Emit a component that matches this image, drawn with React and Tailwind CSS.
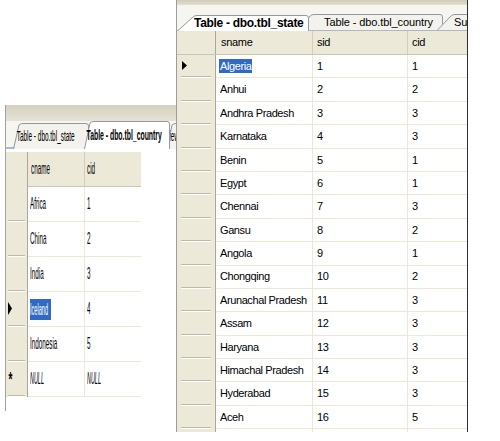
import React from 'react';

const stateRows = [
  ['Algeria', 1, 1],
  ['Anhui', 2, 2],
  ['Andhra Pradesh', 3, 3],
  ['Karnataka', 4, 3],
  ['Benin', 5, 1],
  ['Egypt', 6, 1],
  ['Chennai', 7, 3],
  ['Gansu', 8, 2],
  ['Angola', 9, 1],
  ['Chongqing', 10, 2],
  ['Arunachal Pradesh', 11, 3],
  ['Assam', 12, 3],
  ['Haryana', 13, 3],
  ['Himachal Pradesh', 14, 3],
  ['Hyderabad', 15, 3],
  ['Aceh', 16, 5],
  ['', '', ''],
];

const countryRows = [
  ['Africa', '1'],
  ['China', '2'],
  ['India', '3'],
  ['Iceland', '4'],
  ['Indonesia', '5'],
];

// XP style document tab, left edge slanted
const Tab = ({ width, height, slant, active, drop = 0, className, children }) => {
  const h = height;
  const bottom = active ? h : h - drop;
  const d = `M0.5 ${bottom} L${slant} 2 Q${slant + 1.5} 0.5 ${slant + 4} 0.5 L${width - 3} 0.5 Q${width - 0.5} 0.5 ${width - 0.5} 3 L${width - 0.5} ${bottom}`;
  return (
    <div className={`relative shrink-0 ${active ? 'z-10' : ''} ${className}`} style={{ width, height }}>
      <svg className="absolute inset-0" width={width} height={h}>
        <path d={d + ' Z'} fill={active ? '#ffffff' : '#f3f2ec'} stroke="none" />
        <path d={d} fill="none" stroke="#8f9aa3" strokeWidth="1" />
      </svg>
      <div className="relative h-full flex items-center whitespace-nowrap">{children}</div>
    </div>
  );
};

const Arrow = ({ w, h }) => (
  <svg width={w} height={h} viewBox={`0 0 ${w} ${h}`}>
    <path d={`M0 0 L${w} ${h / 2} L0 ${h} Z`} fill="#000" />
  </svg>
);

const Squeezed = ({ className = '', children }) => (
  <span className={`inline-block origin-left whitespace-nowrap ${className}`}>{children}</span>
);

const StatePanel = () => (
  <div className="absolute left-[176px] top-0 w-[292px] h-[432px] overflow-hidden bg-white border-l border-[#9d9d9d] border-r border-r-[#2f2f2f] font-['Liberation_Sans',Arial,sans-serif] text-black">
    <div className="h-[5px] bg-gradient-to-b from-[#cfccbb] to-[#e2dfd0]" />
    <div className="h-[26px] bg-[#f6f5ef] flex items-end border-b border-[#aeb7c2]">
      <Tab width={132} height={16} slant={16} active className="-mb-px">
        <span className="pl-[17px] text-[12px] font-bold tracking-[-0.3px]">Table - dbo.tbl_state</span>
      </Tab>
      <Tab width={143} height={16} slant={10} className="-ml-[9px]">
        <span className="pl-[24px] text-[11px] tracking-[-0.1px]">Table - dbo.tbl_country</span>
      </Tab>
      <Tab width={60} height={16} slant={14} className="-ml-[6px]">
        <span className="pl-[17px] text-[11px]">Summary</span>
      </Tab>
    </div>
    <div className="flex h-[24px] bg-[#ece9d8] border-b border-[#c8c5b4] text-[11px] tracking-[-0.3px]">
      <div className="w-[39px] shrink-0 border-r border-[#aca899]" />
      <div className="w-[97px] shrink-0 pl-[5px] flex items-center border-r border-[#d2cebd]">sname</div>
      <div className="w-[95px] shrink-0 pl-[4px] flex items-center border-r border-[#d2cebd]">sid</div>
      <div className="flex-1 pl-[4px] flex items-center">cid</div>
    </div>
    {stateRows.map((r, i) => (
      <div key={i} className="flex h-[23.4px] text-[11px] tracking-[-0.4px]">
        <div className="w-[39px] shrink-0 bg-[#ece9d8] border-r border-[#aca899] flex flex-col">
          <div className="flex-1 flex items-center pl-[5px]">{i === 0 && <Arrow w={5} h={9} />}</div>
          <div className="mx-[4px] h-[2px] border-t border-[#bdbaa9] border-b border-b-white" />
        </div>
        <div className="w-[97px] shrink-0 pl-[3px] flex items-center border-r border-b border-[#ebe8d6]">
          {i === 0 ? (
            <span className="bg-[#316ac5] text-white px-px leading-[14px]">{r[0]}</span>
          ) : (
            <span className="px-px">{r[0]}</span>
          )}
        </div>
        <div className="w-[95px] shrink-0 pl-[4px] flex items-center border-r border-b border-[#ebe8d6]">{r[1]}</div>
        <div className="flex-1 pl-[4px] flex items-center border-b border-[#ebe8d6]">{r[2]}</div>
      </div>
    ))}
  </div>
);

const CountryPanel = () => (
  <div className="absolute left-[5px] top-[105px] w-[172px] h-[306px] overflow-hidden bg-white border-l border-[#a3a3a3] font-['Liberation_Sans',Arial,sans-serif] text-black">
    <div className="h-[16px] bg-gradient-to-b from-[#d3d0bf] to-[#e6e3d5]" />
    <div className="h-[28px] bg-[#f6f5ef] flex items-end border-b-2 border-[#a8bcd6] pl-[7px]">
      <Tab width={76} height={26} slant={6} drop={0} className="-mb-[2px]">
        <Squeezed className="pl-[8px] text-[14px] scale-x-[0.46]">Table - dbo.tbl_state</Squeezed>
      </Tab>
      <Tab width={86} height={28} slant={6} active className="-ml-[5px] -mb-[2px]">
        <Squeezed className="pl-[5px] text-[14px] font-bold scale-x-[0.49]">Table - dbo.tbl_country</Squeezed>
      </Tab>
      <Tab width={40} height={26} slant={5} className="-ml-[3px] -mb-[2px]">
        <Squeezed className="pl-[5px] text-[14px] scale-x-[0.45]">iew - dbo</Squeezed>
      </Tab>
    </div>
    <div className="h-[3px]" />
    <div className="flex h-[35px] text-[17px]">
      <div className="w-[22px] shrink-0 bg-[#ece9d8] border-r border-[#aca899]" />
      <div className="w-[57px] shrink-0 bg-[#ece9d8] pl-[3px] flex items-center border-r border-[#d2cebd] border-b border-b-[#c8c5b4]">
        <Squeezed className="scale-x-[0.37]">cname</Squeezed>
      </div>
      <div className="w-[56px] shrink-0 bg-[#ece9d8] pl-[2px] flex items-center border-b border-[#c8c5b4]">
        <Squeezed className="scale-x-[0.37]">cid</Squeezed>
      </div>
    </div>
    {[...countryRows, ['NULL', 'NULL']].map((r, i) => {
      const isNull = i === 5;
      const selected = i === 3;
      return (
        <div key={i} className="flex h-[35px] text-[17px]">
          <div className="w-[22px] shrink-0 bg-[#ece9d8] border-r border-[#aca899] flex flex-col">
            <div className="flex-1 flex items-center pl-[2px]">
              {selected && <Arrow w={4} h={13} />}
              {isNull && <Squeezed className="pl-px text-[20px] font-bold scale-x-[0.5]">*</Squeezed>}
            </div>
            <div className="mx-[2px] h-[2px] border-t border-[#bdbaa9] border-b border-b-white" />
          </div>
          <div className="w-[57px] shrink-0 pl-[2px] flex items-center border-r border-b border-[#ebe8d6]">
            {selected ? (
              <span className="inline-block bg-[#316ac5] w-[21px] h-[21px] overflow-visible leading-[21px] text-white">
                <Squeezed className="scale-x-[0.33]">{r[0]}</Squeezed>
              </span>
            ) : (
              <Squeezed className={isNull ? 'italic scale-x-[0.32]' : 'scale-x-[0.37]'}>{r[0]}</Squeezed>
            )}
          </div>
          <div className="w-[56px] shrink-0 pl-[2px] flex items-center border-b border-[#ebe8d6]">
            <Squeezed className={isNull ? 'italic scale-x-[0.32]' : 'scale-x-[0.37]'}>{r[1]}</Squeezed>
          </div>
        </div>
      );
    })}
  </div>
);

export default function App() {
  return (
    <div className="relative w-[500px] h-[441px] bg-white overflow-hidden">
      <CountryPanel />
      <StatePanel />
    </div>
  );
}
